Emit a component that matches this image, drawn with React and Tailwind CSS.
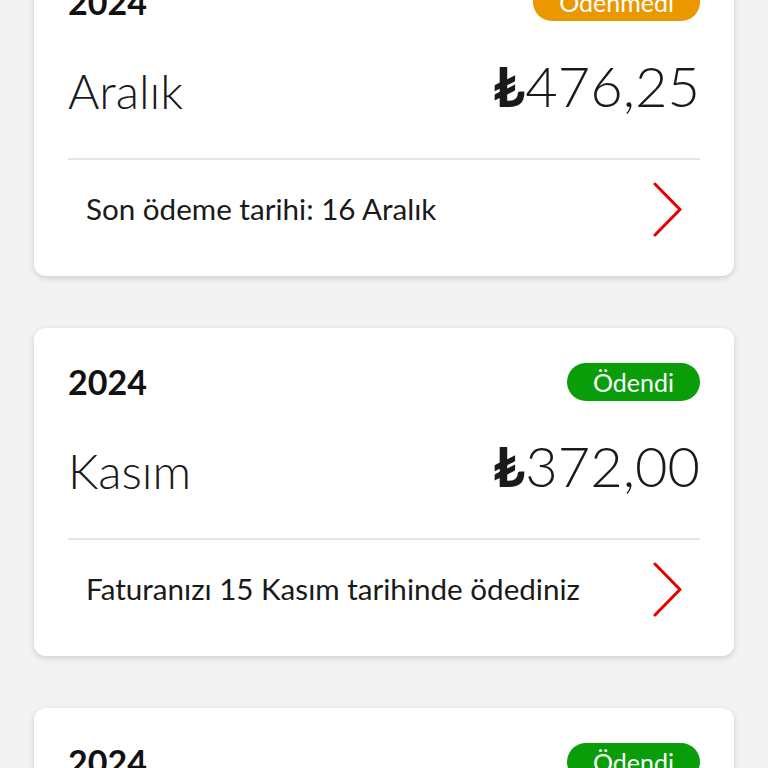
import React from "react";

const bills = [
  { year: "2024", month: "Aralık", amount: "476,25", status: "Ödenmedi", note: "Son ödeme tarihi: 16 Aralık", paid: false },
  { year: "2024", month: "Kasım", amount: "372,00", status: "Ödendi", note: "Faturanızı 15 Kasım tarihinde ödediniz", paid: true },
  { year: "2024", month: "Ekim", amount: "372,00", status: "Ödendi", note: "Faturanızı 15 Ekim tarihinde ödediniz", paid: true },
];

function Chevron() {
  return (
    <svg width="32" height="55" viewBox="0 0 32 55" fill="none" className="shrink-0">
      <polyline points="3,2 28,27.5 3,53" stroke="#e60000" strokeWidth="3" strokeLinecap="round" strokeLinejoin="round" />
    </svg>
  );
}

function Card({ b }) {
  return (
    <div className="bg-white rounded-[12px] shadow-[0_2px_6px_rgba(0,0,0,0.16)] px-[34px] pt-[35px] pb-[14px]">
      <div className="h-[38px] flex items-center justify-between">
        <span className="text-[34px] font-bold text-[#111] leading-none">{b.year}</span>
        <span
          className={
            "h-[38px] rounded-full px-[26px] flex items-center text-white text-[25px] leading-none " +
            (b.paid ? "bg-[#0a9d0a]" : "bg-[#eb9700]")
          }
        >
          {b.status}
        </span>
      </div>
      <div className="h-[137px] flex items-end justify-between pb-[43px]">
        <span className="text-[48px] font-light text-[#1a1a1a] leading-none">{b.month}</span>
        <span className="text-[56px] font-light text-[#1a1a1a] leading-none mb-[1px]">
          <span className="font-bold">₺</span>
          {b.amount}
        </span>
      </div>
      <div className="h-[2px] bg-[#e6e6e6]" />
      <div className="h-[102px] flex items-center justify-between pl-[18px] pr-[16px] pb-[4px]">
        <span className="text-[29.6px] text-[#1a1a1a] leading-none">{b.note}</span>
        <Chevron />
      </div>
    </div>
  );
}

export default function App() {
  return (
    <div className="h-[768px] overflow-hidden bg-[#f3f3f3]" style={{ fontFamily: "Lato, 'Noto Sans', sans-serif" }}>
      <div className="flex flex-col gap-[52px] px-[34px] mt-[-52px]">
        {bills.map((b, i) => (
          <Card key={i} b={b} />
        ))}
      </div>
    </div>
  );
}
